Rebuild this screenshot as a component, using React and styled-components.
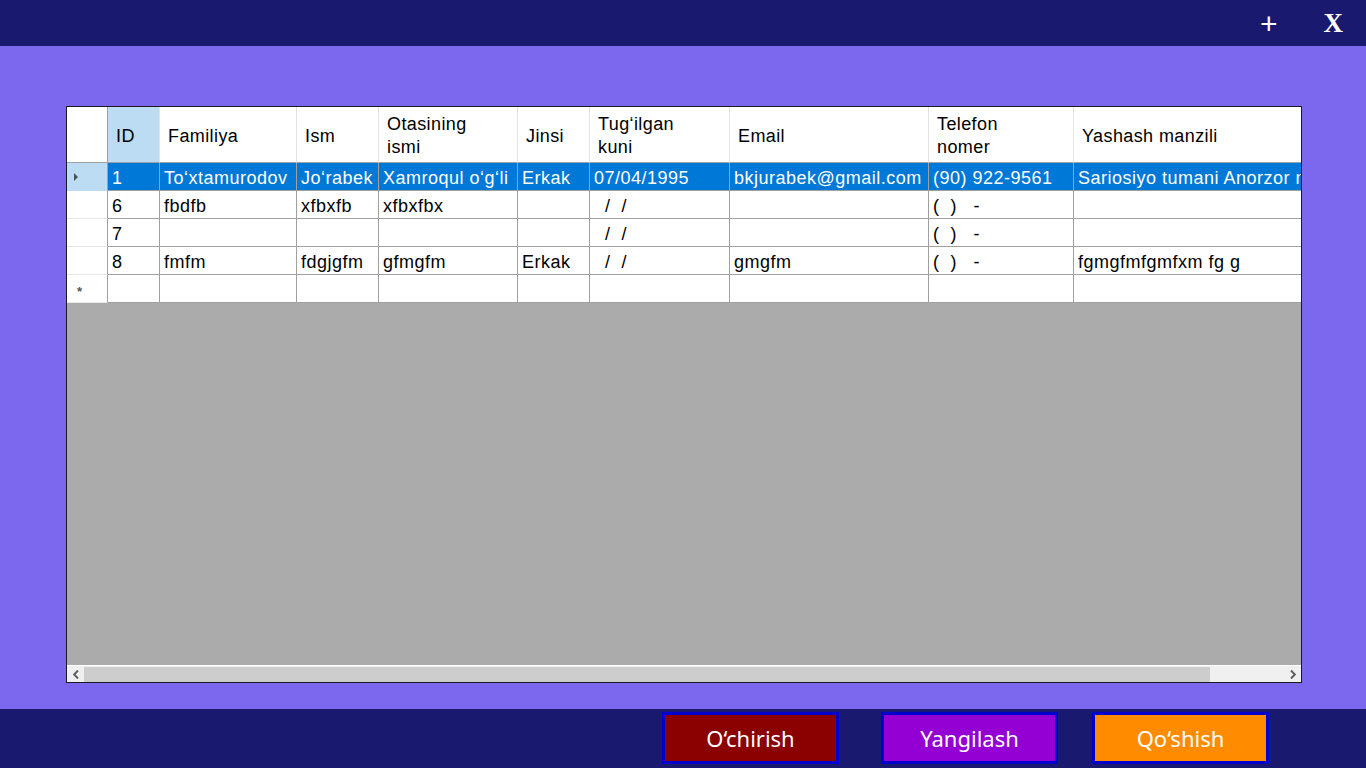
import React from 'react';
import styled, { createGlobalStyle } from 'styled-components';

const Global = createGlobalStyle`
  html, body { margin: 0; padding: 0; }
  body { font-family: "Liberation Sans", Arial, sans-serif; }
  * { box-sizing: border-box; }
`;

const COLS = '41px 52px 137px 82px 139px 72px 140px 199px 145px 320px';

const Page = styled.div`
  width: 1366px;
  height: 768px;
  display: flex;
  flex-direction: column;
  background: #7b68ee;
  overflow: hidden;
`;

const TopBar = styled.header`
  flex: 0 0 46px;
  background: #191970;
  display: flex;
  justify-content: flex-end;
  align-items: center;
  padding-right: 23px;
`;

const PlusBtn = styled.span`
  color: #fff;
  font-family: "Liberation Sans", Arial, sans-serif;
  font-size: 30px;
  line-height: 1;
  margin-right: 46px;
  margin-top: 1px;
  cursor: pointer;
`;

const CloseBtn = styled.span`
  color: #fff;
  font-family: "Liberation Serif", "Times New Roman", serif;
  font-weight: bold;
  font-size: 27px;
  line-height: 1;
  margin-top: 0px;
  cursor: pointer;
`;

const Main = styled.main`
  flex: 1;
  display: flex;
  padding: 60px 64px 26px 66px;
`;

const GridBox = styled.div`
  flex: 1;
  border: 1px solid #1a1a1a;
  background: #ababab;
  display: flex;
  flex-direction: column;
  overflow: hidden;
`;

const TableArea = styled.div`
  flex: 1;
  overflow: hidden;
`;

const Table = styled.div`
  width: max-content;
`;

const Row = styled.div`
  display: grid;
  grid-template-columns: ${COLS};
  height: ${(p) => (p.$header ? 56 : 28)}px;
`;

const HeadCell = styled.div`
  display: flex;
  align-items: center;
  padding: 3px 0 0 8px;
  font-size: 18px;
  letter-spacing: 0.4px;
  line-height: 23px;
  white-space: pre;
  color: #000;
  background: ${(p) => (p.$active ? '#bcdcf4' : '#fff')};
  border-right: 1px solid ${(p) => (p.$corner ? '#a0a0a0' : '#e3e3e3')};
  border-bottom: 1px solid #a0a0a0;
  overflow: hidden;
`;

const RowHead = styled.div`
  display: flex;
  align-items: center;
  padding-left: 6px;
  background: ${(p) => (p.$selected ? '#bcdcf4' : '#fff')};
  border-right: 1px solid #a0a0a0;
  border-bottom: 1px solid ${(p) => (p.$selected ? '#bcdcf4' : '#e8e8e8')};
`;

const Pointer = styled.span`
  width: 0;
  height: 0;
  margin-left: 1px;
  border-top: 4px solid transparent;
  border-bottom: 4px solid transparent;
  border-left: 4px solid #505050;
`;

const NewMark = styled.span`
  font-size: 13px;
  font-weight: bold;
  color: #555;
  margin-left: 4px;
  margin-top: 6px;
`;

const Cell = styled.div`
  display: flex;
  align-items: center;
  padding: 3px 0 0 4px;
  font-size: 18px;
  letter-spacing: 0.5px;
  white-space: pre;
  overflow: hidden;
  color: ${(p) => (p.$selected ? '#fff' : '#000')};
  background: ${(p) => (p.$selected ? '#0078d7' : '#fff')};
  border-right: 1px solid #a0a0a0;
  border-bottom: 1px solid #a0a0a0;
`;

const ScrollBar = styled.div`
  flex: 0 0 17px;
  background: #f0f0f0;
  border-top: 1px solid #fff;
  display: flex;
  align-items: center;
`;

const ScrollArrow = styled.div`
  flex: 0 0 17px;
  height: 16px;
  display: flex;
  align-items: center;
  justify-content: center;
`;

const Thumb = styled.div`
  width: 1126px;
  height: 15px;
  background: #cdcdcd;
`;

const Track = styled.div`
  flex: 1;
`;

const BottomBar = styled.footer`
  flex: 0 0 59px;
  background: #191970;
  display: flex;
  justify-content: flex-end;
  align-items: flex-start;
  padding: 3px 97px 0 0;
`;

const ActionButton = styled.button`
  width: 177px;
  height: 52px;
  margin-left: ${(p) => p.$ml || 0}px;
  border: 3px solid #0000cd;
  background: ${(p) => p.$bg};
  color: #fff;
  font-family: "Noto Sans", "Open Sans", sans-serif;
  font-size: 22px;
  padding: 0 0 1px;
  cursor: pointer;
`;

const headers = [
  'ID',
  'Familiya',
  'Ism',
  'Otasining\nismi',
  'Jinsi',
  'Tug‘ilgan\nkuni',
  'Email',
  'Telefon\nnomer',
  'Yashash manzili',
];

const rows = [
  ['1', 'To‘xtamurodov', 'Jo‘rabek', 'Xamroqul o‘g‘li', 'Erkak', '07/04/1995', 'bkjurabek@gmail.com', '(90) 922-9561', 'Sariosiyo tumani Anorzor mahallasi'],
  ['6', 'fbdfb', 'xfbxfb', 'xfbxfbx', '', '  /  /', '', '(  )   -', ''],
  ['7', '', '', '', '', '  /  /', '', '(  )   -', ''],
  ['8', 'fmfm', 'fdgjgfm', 'gfmgfm', 'Erkak', '  /  /', 'gmgfm', '(  )   -', 'fgmgfmfgmfxm fg g'],
];

const Chevron = ({ dir }) => (
  <svg width="6" height="9" viewBox="0 0 6 9">
    <path
      d={dir === 'left' ? 'M5 0.5 L1.2 4.5 L5 8.5' : 'M1 0.5 L4.8 4.5 L1 8.5'}
      fill="none"
      stroke="#606060"
      strokeWidth="2"
    />
  </svg>
);

export default function App() {
  return (
    <>
      <Global />
      <Page>
        <TopBar>
          <PlusBtn>+</PlusBtn>
          <CloseBtn>X</CloseBtn>
        </TopBar>
        <Main>
          <GridBox>
            <TableArea>
              <Table>
                <Row $header>
                  <HeadCell $corner />
                  {headers.map((h, i) => (
                    <HeadCell key={h} $active={i === 0}>
                      {h}
                    </HeadCell>
                  ))}
                </Row>
                {rows.map((r, ri) => (
                  <Row key={ri}>
                    <RowHead $selected={ri === 0}>{ri === 0 && <Pointer />}</RowHead>
                    {r.map((c, ci) => (
                      <Cell key={ci} $selected={ri === 0}>
                        {c}
                      </Cell>
                    ))}
                  </Row>
                ))}
                <Row>
                  <RowHead>
                    <NewMark>*</NewMark>
                  </RowHead>
                  {headers.map((h) => (
                    <Cell key={h} />
                  ))}
                </Row>
              </Table>
            </TableArea>
            <ScrollBar>
              <ScrollArrow>
                <Chevron dir="left" />
              </ScrollArrow>
              <Thumb />
              <Track />
              <ScrollArrow>
                <Chevron dir="right" />
              </ScrollArrow>
            </ScrollBar>
          </GridBox>
        </Main>
        <BottomBar>
          <ActionButton $bg="#8b0000">O‘chirish</ActionButton>
          <ActionButton $bg="#9400d3" $ml={42}>Yangilash</ActionButton>
          <ActionButton $bg="#ff8c00" $ml={34}>Qo‘shish</ActionButton>
        </BottomBar>
      </Page>
    </>
  );
}
